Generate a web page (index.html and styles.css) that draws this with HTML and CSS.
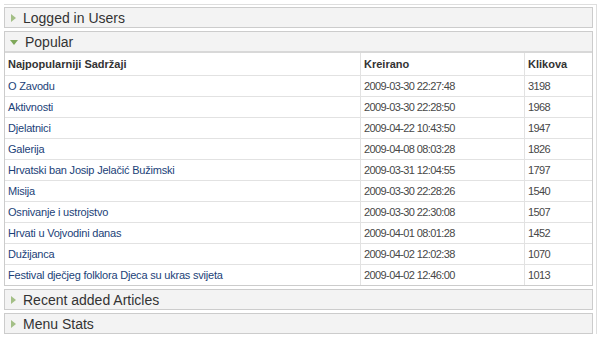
FILE: index.html
```html
<!DOCTYPE html>
<html>
<head>
<meta charset="utf-8">
<link rel="stylesheet" href="styles.css">
</head>
<body>
<div class="wrap">
  <div class="panel">
    <div class="head"><span class="tri closed"></span>Logged in Users</div>
  </div>
  <div class="panel">
    <div class="head open-head"><span class="tri open"></span>Popular</div>
    <table class="grid">
      <thead>
        <tr><th class="c1">Najpopularniji Sadržaji</th><th class="c2">Kreirano</th><th class="c3">Klikova</th></tr>
      </thead>
      <tbody>
        <tr><td><a href="#">O Zavodu</a></td><td class="num">2009-03-30 22:27:48</td><td class="num">3198</td></tr>
        <tr><td><a href="#">Aktivnosti</a></td><td class="num">2009-03-30 22:28:50</td><td class="num">1968</td></tr>
        <tr><td><a href="#">Djelatnici</a></td><td class="num">2009-04-22 10:43:50</td><td class="num">1947</td></tr>
        <tr><td><a href="#">Galerija</a></td><td class="num">2009-04-08 08:03:28</td><td class="num">1826</td></tr>
        <tr><td><a href="#">Hrvatski ban Josip Jelačić Bužimski</a></td><td class="num">2009-03-31 12:04:55</td><td class="num">1797</td></tr>
        <tr><td><a href="#">Misija</a></td><td class="num">2009-03-30 22:28:26</td><td class="num">1540</td></tr>
        <tr><td><a href="#">Osnivanje i ustrojstvo</a></td><td class="num">2009-03-30 22:30:08</td><td class="num">1507</td></tr>
        <tr><td><a href="#">Hrvati u Vojvodini danas</a></td><td class="num">2009-04-01 08:01:28</td><td class="num">1452</td></tr>
        <tr><td><a href="#">Dužijanca</a></td><td class="num">2009-04-02 12:02:38</td><td class="num">1070</td></tr>
        <tr><td><a href="#">Festival dječjeg folklora Djeca su ukras svijeta</a></td><td class="num">2009-04-02 12:46:00</td><td class="num">1013</td></tr>
      </tbody>
    </table>
  </div>
  <div class="panel">
    <div class="head"><span class="tri closed"></span>Recent added Articles</div>
  </div>
  <div class="panel last">
    <div class="head"><span class="tri closed"></span>Menu Stats</div>
  </div>
</div>
</body>
</html>
```
FILE: styles.css
```css
html, body {
  margin: 0;
  padding: 0;
  background: #ffffff;
}
body {
  font-family: "Liberation Sans", Arial, sans-serif;
  color: #333;
  padding: 4px 0 0 4px;
}
.wrap {
  width: 589px;
  border-top: 1px solid #dedede;
  border-right: 1px solid #dedede;
  padding: 2px 3px 0 0;
}
.panel {
  border: 1px solid #cccccc;
  margin-bottom: 3px;
  background: #fff;
}
.panel.last {
  margin-bottom: 0;
}
.head {
  height: 19px;
  background: #f3f3f3;
  font-size: 14px;
  color: #333;
  display: flex;
  align-items: center;
  padding-left: 6px;
}
.open-head {
  border-bottom: 2px solid #d8d8d8;
}
.tri {
  display: inline-block;
  width: 0;
  height: 0;
  margin-right: 7px;
}
.tri.closed {
  border-top: 4px solid transparent;
  border-bottom: 4px solid transparent;
  border-left: 5px solid #a3bf86;
}
.tri.open {
  border-left: 4px solid transparent;
  border-right: 4px solid transparent;
  border-top: 5px solid #7fa85a;
  margin-left: -1px;
  margin-top: 1px;
}
.grid {
  width: 100%;
  border-collapse: collapse;
  font-size: 11px;
}
.grid thead tr {
  height: 22px;
}
.grid tbody tr {
  height: 21px;
}
.grid th {
  text-align: left;
  font-weight: bold;
  color: #333;
  padding: 0 3px;
  border-bottom: 1px solid #e2e2e2;
  border-left: 1px solid #e2e2e2;
}
.grid td {
  padding: 0 3px;
  color: #444;
  border-bottom: 1px solid #e2e2e2;
  border-left: 1px solid #e2e2e2;
}
.grid tr > :first-child {
  border-left: none;
}
.grid tbody tr:last-child td {
  border-bottom: none;
}
.c1 { width: 349px; }
.c2 { width: 157px; }
.grid a {
  color: #1b3f78;
  text-decoration: none;
  letter-spacing: -0.2px;
}
.grid td.num {
  letter-spacing: -0.6px;
  color: #474747;
}
```
